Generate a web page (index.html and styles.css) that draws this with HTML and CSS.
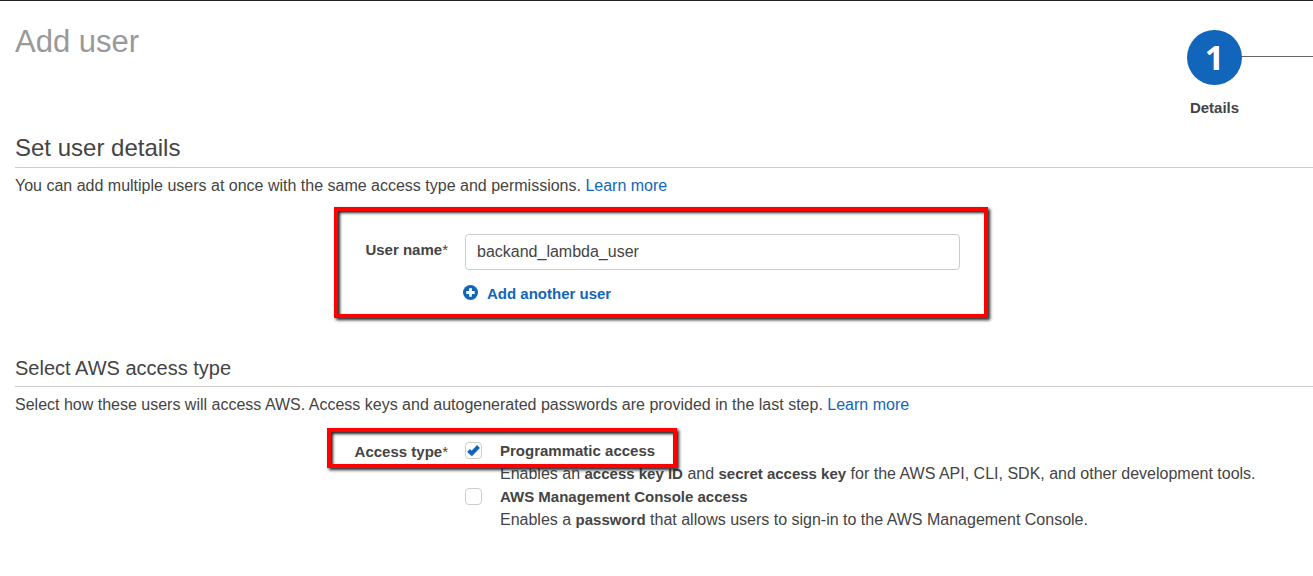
FILE: index.html
```
<!DOCTYPE html>
<html lang="en">
<head>
<meta charset="utf-8">
<title>Add user</title>
<link rel="stylesheet" href="styles.css">
</head>
<body>
<main class="page">
  <header class="top">
    <h1>Add user</h1>
    <div class="step">
      <div class="circle">1</div>
      <div class="step-label">Details</div>
    </div>
  </header>
  <section class="details">
    <h2>Set user details</h2>
    <p class="intro">You can add multiple users at once with the same access type and permissions. <a href="#">Learn more</a></p>
    <div class="row user-row">
      <label class="label" for="user">User name<span class="star">*</span></label>
      <div class="field">
        <input class="text" id="user" type="text" value="backand_lambda_user">
        <button class="add" type="button"><svg class="plus" viewBox="0 0 16 16"><circle cx="8" cy="8" r="8"/><path d="M8 3.5v9M3.5 8h9"/></svg>Add another user</button>
      </div>
      <div class="mark mark-user"></div>
    </div>
  </section>
  <section class="access">
    <h3>Select AWS access type</h3>
    <p class="intro">Select how these users will access AWS. Access keys and autogenerated passwords are provided in the last step. <a href="#">Learn more</a></p>
    <div class="row access-row">
      <div class="label">Access type<span class="star">*</span></div>
      <div class="options">
        <div class="option">
          <span class="tick-box">
            <input class="check" type="checkbox" id="prog" checked>
            <svg class="tick" viewBox="0 0 17 17"><path d="M3.5 8.5l3.3 3 6.7-7"/></svg>
          </span>
          <div><label class="name" for="prog">Programmatic access</label>
          <p>Enables an <b>access key ID</b> and <b>secret access key</b> for the AWS API, CLI, SDK, and other development tools.</p></div>
        </div>
        <div class="option">
          <span class="tick-box">
            <input class="check" type="checkbox" id="console">
            <svg class="tick" viewBox="0 0 17 17"><path d="M3.5 8.5l3.3 3 6.7-7"/></svg>
          </span>
          <div><label class="name" for="console">AWS Management Console access</label>
          <p>Enables a <b>password</b> that allows users to sign-in to the AWS Management Console.</p></div>
        </div>
      </div>
      <div class="mark mark-access"></div>
    </div>
  </section>
</main>
</body>
</html>
```
FILE: styles.css
```
* { box-sizing: border-box; }
body { margin: 0; background: #fff; color: #444; font: 16px/23px "Liberation Sans", Arial, sans-serif; overflow-x: hidden; }
h1, h2, h3, p { margin: 0; font-weight: 400; }
a { color: #1166bb; text-decoration: none; }
b, .label, .name, .step-label { font-size: 15px; font-weight: 700; }
.page { border-top: 1px solid #222; padding-left: 15px; }
.top { display: flex; justify-content: space-between; height: 128px; }
h1 { font-size: 31px; line-height: 40px; padding-top: 21px; color: #999; }
.step { width: 126px; padding-top: 29px; position: relative; }
.step::before { content: ""; position: absolute; left: 54px; right: 0; top: 55px; border-top: 1px solid #666; }
.circle { width: 55px; height: 55px; border-radius: 50%; background: #1166bb; color: #fff; font-family: "Open Sans", sans-serif; font-weight: 700; font-size: 34px; line-height: 54px; text-align: center; }
.step-label { width: 55px; text-align: center; padding-top: 11px; }
h2 { font-size: 24px; line-height: 38px; border-bottom: 1px solid #ccc; }
h3 { font-size: 20px; line-height: 36px; border-bottom: 1px solid #ccc; }
.intro { padding-top: 6px; }
.row { position: relative; display: flex; gap: 17px; }
.label { width: 433px; text-align: right; }
.star { font-weight: 400; }
.user-row { padding-top: 37px; }
.user-row .label { padding-top: 4px; }
.field { width: 495px; }
.text { display: block; width: 100%; height: 36px; border: 1px solid #ccc; border-radius: 4px; padding: 0 11px; font: inherit; color: #444; }
.add { display: flex; align-items: center; margin-top: 12px; padding: 0; border: 0; background: none; color: #1166bb; font: inherit; font-size: 15px; font-weight: 700; }
.plus { width: 15px; height: 15px; margin: 0 9px 2px -2px; fill: #1166bb; stroke: #fff; stroke-width: 3; }
.plus circle { stroke: none; }
.mark { position: absolute; border: 4px solid #f00; box-shadow: 2px 2px 3px #222, inset 2px 2px 3px #222; pointer-events: none; }
.mark-user { left: 319px; top: 10px; width: 654px; height: 111px; }
.access { padding-top: 45px; }
.access-row { padding-top: 23px; }
.mark-access { left: 312px; top: 12px; width: 350px; height: 40px; }
.access-row .label { padding-top: 1px; }
.option { display: flex; gap: 18px; }
.tick-box { position: relative; flex: none; width: 17px; height: 17px; margin: 3px 0; }
.check { appearance: none; display: block; width: 17px; height: 17px; margin: 0; border: 1px solid #ccc; border-radius: 4px; background: #fff; }
.tick { position: absolute; inset: 0; display: none; fill: none; stroke: #1166bb; stroke-width: 4; pointer-events: none; }
.check:checked + .tick { display: block; }
```
